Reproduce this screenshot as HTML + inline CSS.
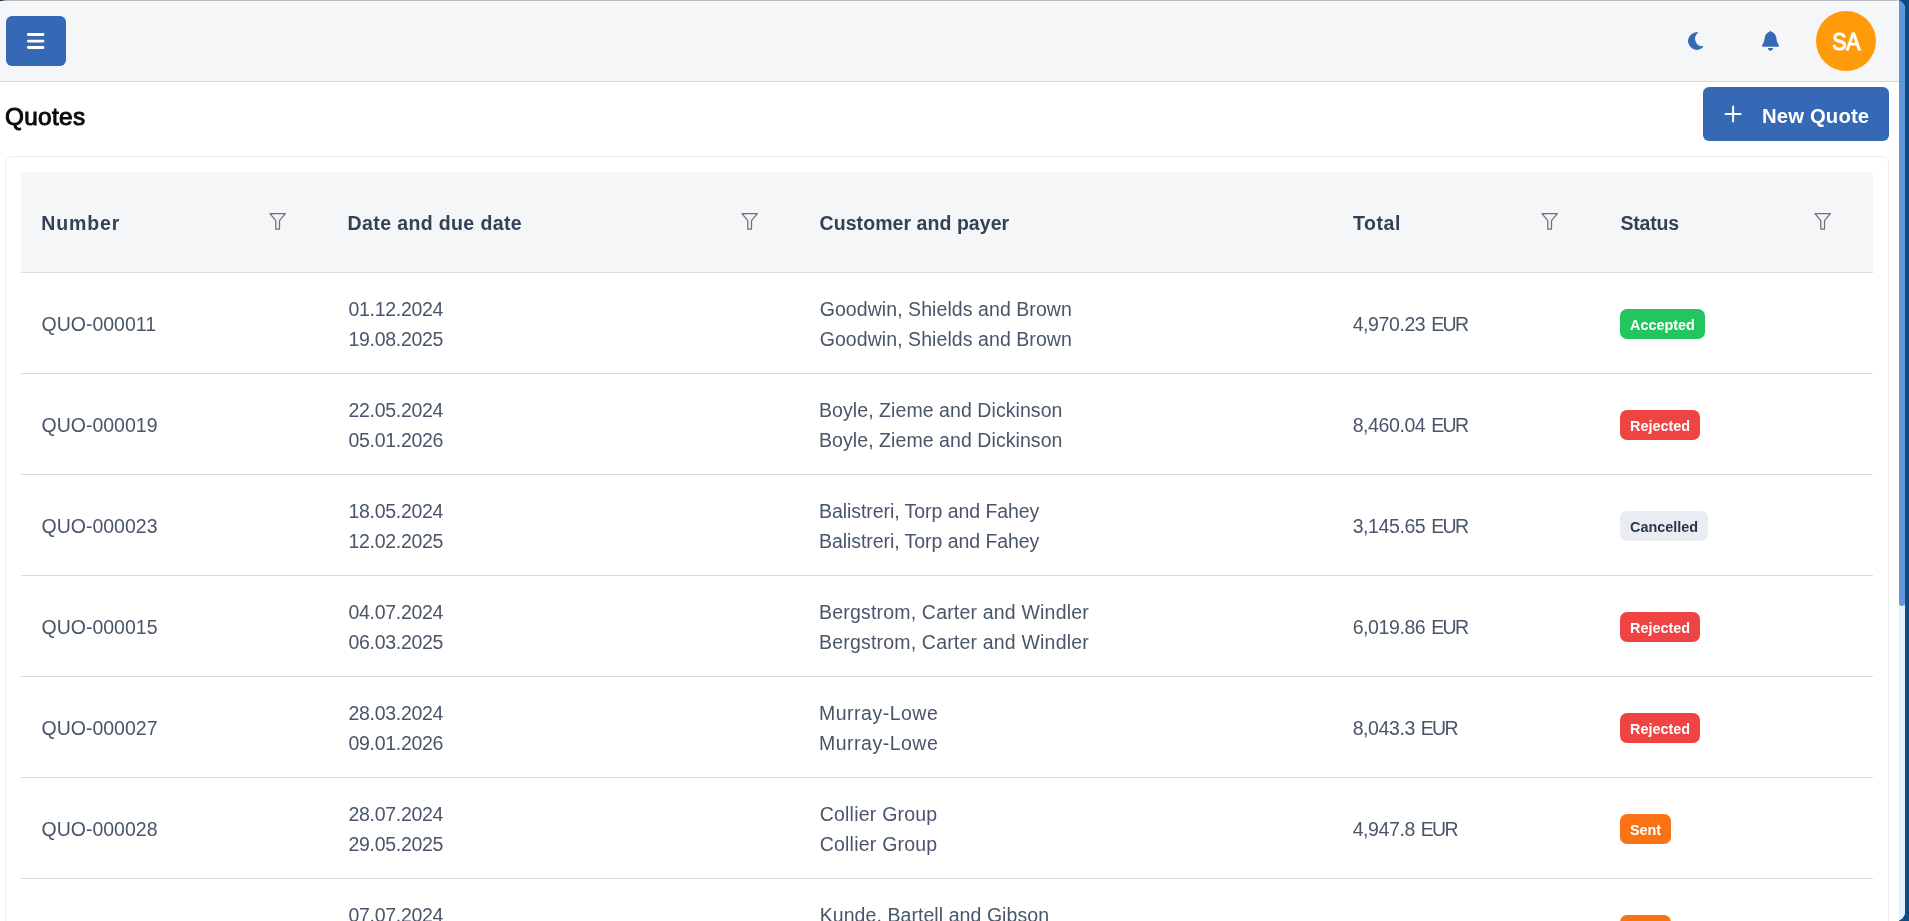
<!DOCTYPE html>
<html lang="en">
<head>
<meta charset="utf-8">
<title>Quotes</title>
<style>
*{box-sizing:border-box;margin:0;padding:0}
html,body{width:1909px;height:921px;overflow:hidden;background:#fff}
body{font-family:"Liberation Sans",sans-serif;color:#495669;position:relative}
.abs{position:absolute}
#gl{position:absolute;left:0;top:0;width:1905px;height:921px;will-change:transform}
#winedge{left:1899px;top:0;width:10px;height:921px;background:#0d4b82}
#page{left:0;top:0;width:1905px;height:921px;background:#fff;border-top-right-radius:9px;border-bottom-right-radius:9px;overflow:hidden}
#topline{left:0;top:0;width:1899px;height:1px;background:linear-gradient(90deg,#12324f 0,#12324f 2px,#8fa0ae 4px,#bcbec1 8px);z-index:5}
#track{left:1899px;top:0;width:6px;height:921px;background:#e8f1fb}
#thumb{left:1899px;top:0;width:6px;height:606px;background:#6196dc;border-bottom-left-radius:3px;border-bottom-right-radius:3px}
#topbar{left:0;top:0;width:1899px;height:82px;background:#f4f6f8;border-bottom:1px solid #d5d9de}
#menu{left:6px;top:16px;width:60px;height:50px;background:#3669b5;border-radius:6px}
#avatar{left:1816px;top:11px;width:60px;height:60px;border-radius:50%;background:#ff9a0a;color:#fff;font-size:23.3px;line-height:62px;text-align:center;-webkit-text-stroke:1.1px #fff;letter-spacing:-0.2px;padding-left:0.6px}
#avatar span{display:inline-block;transform:scaleX(0.915)}
#title{left:5px;top:99px;font-size:24.3px;line-height:36px;color:#0b0b0b;-webkit-text-stroke:1px #0b0b0b;letter-spacing:0.35px;white-space:nowrap}
#newbtn{left:1703px;top:87px;width:186px;height:54px;background:#3669b5;border-radius:6px;color:#fff}
#newbtn span{position:absolute;left:59px;top:0;line-height:58px;font-size:20.3px;font-weight:bold;white-space:nowrap;letter-spacing:0.15px}
#card{left:5px;top:156px;width:1884px;height:800px;border:1px solid #ebecee;border-radius:7.5px;background:#fff}
#thead{left:21px;top:172px;width:1852px;height:101px;background:#f4f6f8;border-bottom:1px solid #d9dde2}
.th{position:absolute;top:206px;letter-spacing:0.55px;font-size:19.5px;line-height:34px;font-weight:bold;color:#334155;white-space:nowrap}
.row{position:absolute;left:21px;width:1852px;height:101px;border-bottom:1px solid #d9dbde}
.c{position:absolute;white-space:nowrap;font-size:19.5px;line-height:30px;color:#495669}
.c1{left:20.5px;top:36px}
.c2{left:327.5px;top:21px;letter-spacing:-0.3px}
.c3{left:798.7px;top:21px;letter-spacing:0.07px}
.c4{left:1331.7px;top:36px;letter-spacing:-0.42px;word-spacing:1px}
.u{letter-spacing:-1.7px}
.tag{position:absolute;left:1599px;top:36px;height:30px;border-radius:7px;color:#fff;font-weight:bold;font-size:14.4px;line-height:33.4px;text-align:center;white-space:nowrap}
.ok{background:#22c55e;width:85px}
.rej{background:#ef4444;width:80px}
.can{background:#e9edf1;color:#2a364a;width:88px}
.sent{background:#f97316;width:51px}
.flt{position:absolute;top:211px;width:20px;height:20px}
</style>
</head>
<body>
<div id="winedge" class="abs"></div>
<div id="page" class="abs">
<div id="gl">
  <div id="topbar" class="abs"></div>
  <div id="topline" class="abs"></div>
  <div id="menu" class="abs"><svg width="60" height="50" viewBox="0 0 60 50"><g fill="#fff"><rect x="21" y="17" width="17.4" height="3" rx="1.3"/><rect x="21" y="23.7" width="17.4" height="2.7" rx="1.3"/><rect x="21" y="30" width="17.4" height="2.9" rx="1.3"/></g></svg></div>

  <svg class="abs" style="left:1685px;top:31px" width="20" height="20" viewBox="0 0 20 20"><path d="M12.6 1.75 A8.3 8.3 0 1 0 18 15.6 A7.78 7.78 0 0 1 12.6 1.75 Z" fill="#3669b5" stroke="#3669b5" stroke-width="1" stroke-linejoin="round"/></svg>
  <svg class="abs" style="left:1760px;top:29px" width="22" height="24" viewBox="0 0 22 24"><path d="M10.5 1.7 C10 1.7 9.7 2.1 9.6 2.7 C7.2 3.3 5.3 5.4 4.8 8.2 L4.2 11.6 C4 12.9 3.5 14 2.5 15.4 C1.7 16.3 2.2 17.8 3.4 17.8 H17.6 C18.8 17.8 19.3 16.3 18.5 15.4 C17.5 14 17 12.9 16.8 11.6 L16.2 8.2 C15.7 5.4 13.8 3.3 11.4 2.7 C11.3 2.1 11 1.7 10.5 1.7 Z M8 19.1 H13 C13 20.6 11.9 21.8 10.5 21.8 C9.1 21.8 8 20.6 8 19.1 Z" fill="#3669b5"/></svg>
  <div id="avatar" class="abs"><span>SA</span></div>

  <div id="title" class="abs">Quotes</div>
  <div id="newbtn" class="abs">
    <svg class="abs" style="left:20.8px;top:18px" width="18" height="18" viewBox="0 0 18 18"><path d="M9.1 1.6V16.6M1.6 9.1H16.6" stroke="#fff" stroke-width="2" stroke-linecap="round" fill="none"/></svg>
    <span>New Quote</span>
  </div>

  <div id="card" class="abs"></div>
  <div id="thead" class="abs"></div>
  <div class="th" style="left:41.2px;letter-spacing:0.9px">Number</div>
  <div class="th" style="left:347.6px;letter-spacing:0.38px">Date and due date</div>
  <div class="th" style="left:819.6px;letter-spacing:0.06px">Customer and payer</div>
  <div class="th" style="left:1353px">Total</div>
  <div class="th" style="left:1620.5px;letter-spacing:-0.2px">Status</div>

  <svg class="flt" style="left:268px" viewBox="0 0 20 20"><path d="M2 2.6H17.3L11.5 9.7V18H7.8V9.7Z" fill="none" stroke="#6a6e76" stroke-width="1.25" stroke-linejoin="round"/></svg>
  <svg class="flt" style="left:740px" viewBox="0 0 20 20"><path d="M2 2.6H17.3L11.5 9.7V18H7.8V9.7Z" fill="none" stroke="#6a6e76" stroke-width="1.25" stroke-linejoin="round"/></svg>
  <svg class="flt" style="left:1540px" viewBox="0 0 20 20"><path d="M2 2.6H17.3L11.5 9.7V18H7.8V9.7Z" fill="none" stroke="#6a6e76" stroke-width="1.25" stroke-linejoin="round"/></svg>
  <svg class="flt" style="left:1813.4px" viewBox="0 0 20 20"><path d="M2 2.6H17.3L11.5 9.7V18H7.8V9.7Z" fill="none" stroke="#6a6e76" stroke-width="1.25" stroke-linejoin="round"/></svg>

  <div class="row" style="top:273px">
    <div class="c c1">QUO-000011</div>
    <div class="c c2">01.12.2024<br>19.08.2025</div>
    <div class="c c3">Goodwin, Shields and Brown<br>Goodwin, Shields and Brown</div>
    <div class="c c4">4,970.23 <span class="u">EUR</span></div>
    <div class="tag ok">Accepted</div>
  </div>
  <div class="row" style="top:374px">
    <div class="c c1">QUO-000019</div>
    <div class="c c2">22.05.2024<br>05.01.2026</div>
    <div class="c c3" style="left:798px">Boyle, Zieme and Dickinson<br>Boyle, Zieme and Dickinson</div>
    <div class="c c4">8,460.04 <span class="u">EUR</span></div>
    <div class="tag rej">Rejected</div>
  </div>
  <div class="row" style="top:475px">
    <div class="c c1">QUO-000023</div>
    <div class="c c2">18.05.2024<br>12.02.2025</div>
    <div class="c c3" style="left:798px;letter-spacing:-0.06px">Balistreri, Torp and Fahey<br>Balistreri, Torp and Fahey</div>
    <div class="c c4">3,145.65 <span class="u">EUR</span></div>
    <div class="tag can">Cancelled</div>
  </div>
  <div class="row" style="top:576px">
    <div class="c c1">QUO-000015</div>
    <div class="c c2">04.07.2024<br>06.03.2025</div>
    <div class="c c3" style="left:798px;letter-spacing:0.19px">Bergstrom, Carter and Windler<br>Bergstrom, Carter and Windler</div>
    <div class="c c4">6,019.86 <span class="u">EUR</span></div>
    <div class="tag rej">Rejected</div>
  </div>
  <div class="row" style="top:677px">
    <div class="c c1">QUO-000027</div>
    <div class="c c2">28.03.2024<br>09.01.2026</div>
    <div class="c c3" style="left:798px;letter-spacing:0.5px">Murray-Lowe<br>Murray-Lowe</div>
    <div class="c c4">8,043.3 <span class="u">EUR</span></div>
    <div class="tag rej">Rejected</div>
  </div>
  <div class="row" style="top:778px">
    <div class="c c1">QUO-000028</div>
    <div class="c c2">28.07.2024<br>29.05.2025</div>
    <div class="c c3" style="left:798.7px;letter-spacing:0.22px">Collier Group<br>Collier Group</div>
    <div class="c c4">4,947.8 <span class="u">EUR</span></div>
    <div class="tag sent">Sent</div>
  </div>
  <div class="row" style="top:879px">
    <div class="c c1">QUO-000024</div>
    <div class="c c2">07.07.2024<br>21.03.2025</div>
    <div class="c c3">Kunde, Bartell and Gibson<br>Kunde, Bartell and Gibson</div>
    <div class="c c4">5,122.4 <span class="u">EUR</span></div>
    <div class="tag sent">Sent</div>
  </div>

</div>
  <div id="track" class="abs"></div>
  <div id="thumb" class="abs"></div>
</div>
</body>
</html>
